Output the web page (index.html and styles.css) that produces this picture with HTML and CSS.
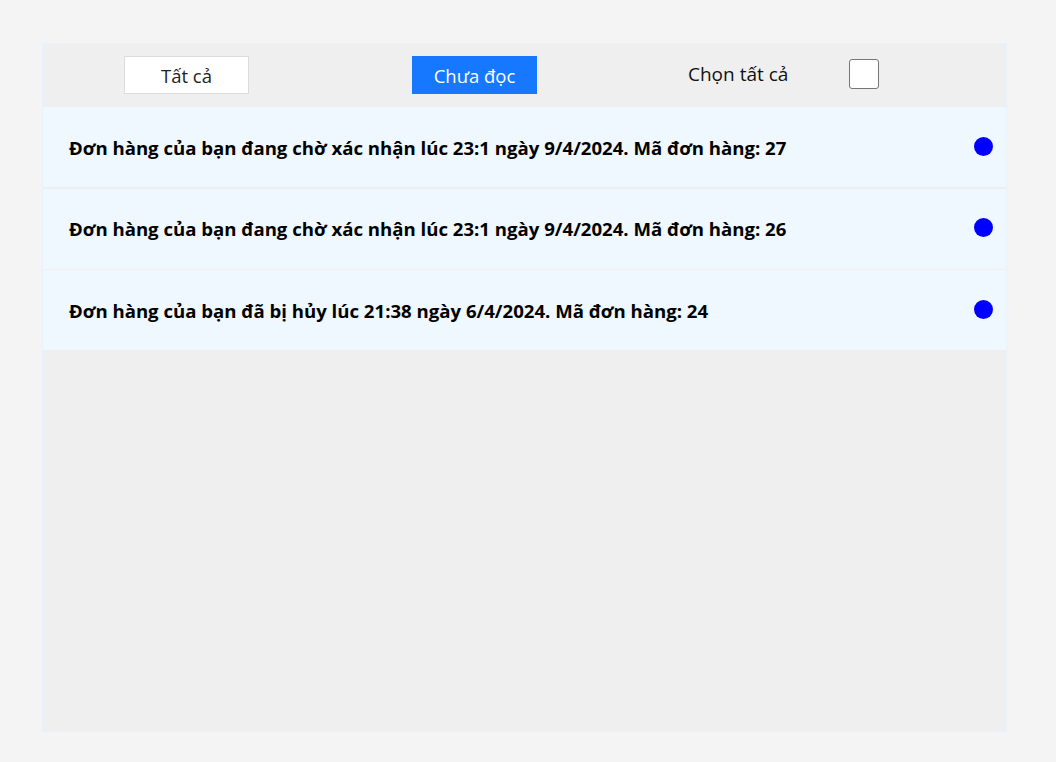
FILE: index.html
```html
<!DOCTYPE html>
<html lang="vi">
<head>
<meta charset="utf-8">
<title>Thông báo</title>
<link rel="stylesheet" href="styles.css">
</head>
<body>
<div class="panel">
  <div class="toolbar">
    <button class="tab">Tất cả</button>
    <button class="tab tab-active">Chưa đọc</button>
    <label class="select-all">
      <span class="select-label">Chọn tất cả</span>
      <span class="checkbox"></span>
    </label>
  </div>
  <ul class="list">
    <li class="item"><span class="item-text">Đơn hàng của bạn đang chờ xác nhận lúc 23:1 ngày 9/4/2024. Mã đơn hàng: 27</span><span class="dot"></span></li>
    <li class="item"><span class="item-text">Đơn hàng của bạn đang chờ xác nhận lúc 23:1 ngày 9/4/2024. Mã đơn hàng: 26</span><span class="dot"></span></li>
    <li class="item"><span class="item-text">Đơn hàng của bạn đã bị hủy lúc 21:38 ngày 6/4/2024. Mã đơn hàng: 24</span><span class="dot"></span></li>
  </ul>
</div>
</body>
</html>
```
FILE: styles.css
```css
html, body {
  margin: 0;
  padding: 0;
}
body {
  background: #f4f4f4;
  font-family: "Open Sans", "Noto Sans", sans-serif;
  color: #000;
  padding: 43px 0 0 42px;
}
.panel {
  width: 963px;
  height: 687px;
  background: #efefef;
  border: 1px solid #e8f2fc;
  display: flex;
  flex-direction: column;
}
.toolbar {
  height: 63px;
  display: flex;
  align-items: center;
  padding-left: 81px;
  box-sizing: border-box;
}
.tab {
  width: 125px;
  height: 38px;
  font-family: inherit;
  font-size: 18.5px;
  color: #222;
  background: #fff;
  border: 1px solid #dcdcdc;
  padding: 0;
  margin-top: -1px;
}
.tab-active {
  background: #1677ff;
  border-color: #1677ff;
  color: #fff;
  margin-left: 163px;
}
.select-all {
  display: flex;
  align-items: center;
  margin-left: 151px;
}
.select-label {
  font-size: 19px;
  color: #111;
  width: 102px;
  white-space: nowrap;
  margin-top: -3px;
}
.checkbox {
  width: 28px;
  height: 28px;
  border: 1px solid #767676;
  border-radius: 3px;
  background: #fff;
  margin-left: 59px;
  margin-top: -4px;
}
.list {
  list-style: none;
  margin: 0;
  padding: 0;
  display: flex;
  flex-direction: column;
  gap: 1.5px;
}
.item {
  height: 80px;
  background: #eff7ff;
  display: flex;
  align-items: center;
  justify-content: space-between;
  padding: 0 13px 0 26px;
}
.item-text {
  font-size: 18.6px;
  font-weight: 700;
}
.dot {
  width: 19px;
  height: 19px;
  border-radius: 50%;
  background: #0000ff;
  margin-top: -2px;
}
```
